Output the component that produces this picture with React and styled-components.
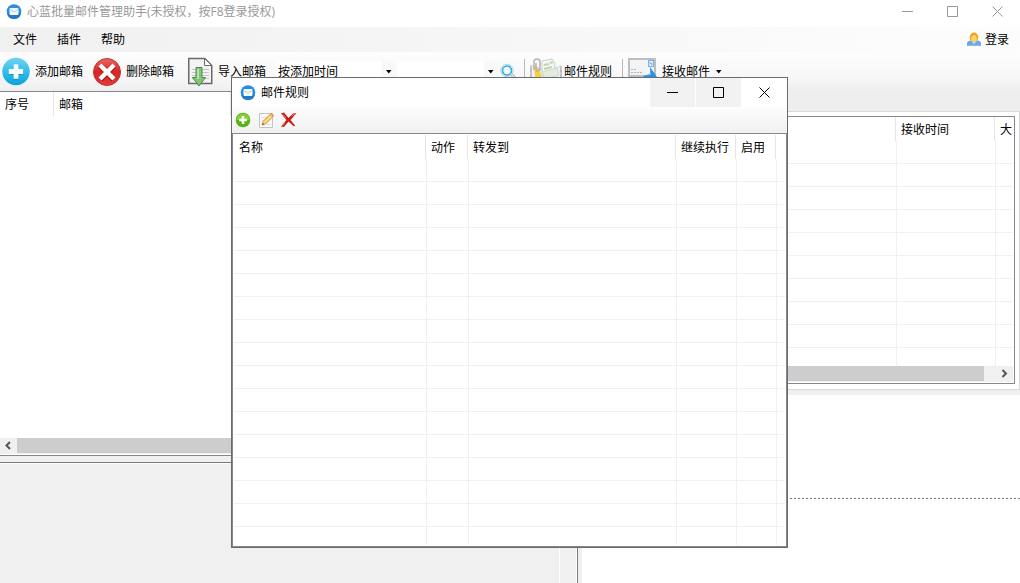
import React, { useState } from 'react'
import styled, { createGlobalStyle, css } from 'styled-components'

const RULE_COLUMNS = [
  { label: '名称', width: 192 },
  { label: '动作', width: 42 },
  { label: '转发到', width: 208 },
  { label: '继续执行', width: 60 },
  { label: '启用', width: 40 },
  { label: '' },
]
const MAIL_COLUMNS = [
  { label: '', width: 308 },
  { label: '接收时间', width: 99 },
  { label: '大' },
]
const ACCOUNT_COLUMNS = [
  { label: '序号', width: 54 },
  { label: '邮箱', width: 177 },
  { label: '' },
]
const MENUS = ['文件', '插件', '帮助']

export default function App() {
  const [order, setOrder] = useState('按添加时间')
  const [query, setQuery] = useState('')
  return (
    <Window>
      <GlobalStyle />
      <TitleBar>
        <AppIcon />
        <Title>心蓝批量邮件管理助手(未授权，按F8登录授权)</Title>
        <WindowControls />
      </TitleBar>
      <MenuBar>
        {MENUS.map(label => (
          <MenuButton key={label}>{label}</MenuButton>
        ))}
        <LoginButton>
          <UserIcon />
          登录
        </LoginButton>
      </MenuBar>
      <Toolbar>
        <ToolGroup>
          <ToolButton>
            <AddIcon />
            添加邮箱
          </ToolButton>
          <ToolButton>
            <DeleteIcon />
            删除邮箱
          </ToolButton>
        </ToolGroup>
        <ToolButton>
          <ImportIcon />
          导入邮箱
        </ToolButton>
        <Combo $width={118}>
          <select
            aria-label="排序"
            value={order}
            onChange={e => setOrder(e.target.value)}
          >
            <option>按添加时间</option>
          </select>
          <Caret />
        </Combo>
        <Combo $width={99}>
          <select
            aria-label="搜索"
            value={query}
            onChange={e => setQuery(e.target.value)}
          >
            <option value="" />
          </select>
          <Caret />
        </Combo>
        <SearchButton aria-label="查找">
          <SearchIcon />
        </SearchButton>
        <Divider />
        <ToolButton $tight>
          <RulesIcon />
          邮件规则
        </ToolButton>
        <Divider />
        <ToolButton>
          <ReceiveIcon />
          接收邮件
          <Caret />
        </ToolButton>
      </Toolbar>
      <Main>
        <LeftPane>
          <AccountList>
            <TableClip>
              <ListTable columns={ACCOUNT_COLUMNS} rows={0} />
            </TableClip>
            <ScrollBar>
              <ScrollButton aria-label="向左">
                <ArrowIcon d="M6 1 2.5 4.5 6 8" />
              </ScrollButton>
              <ScrollThumb />
            </ScrollBar>
          </AccountList>
          <LogPane>
            <LogText />
            <LogGutter />
          </LogPane>
        </LeftPane>
        <RightPane>
          <TabStrip />
          <TabPage>
            <MailList>
              <TableClip>
                <ListTable columns={MAIL_COLUMNS} rows={10} />
              </TableClip>
              <ScrollBar>
                <ScrollThumb />
                <ScrollTrack />
                <ScrollButton aria-label="向右">
                  <ArrowIcon d="M2.5 1 6 4.5 2.5 8" />
                </ScrollButton>
              </ScrollBar>
            </MailList>
          </TabPage>
          <Preview>
            <PreviewHead />
          </Preview>
        </RightPane>
      </Main>
      <RulesDialog />
    </Window>
  )
}

const RulesDialog = () => (
  <Dialog role="dialog" aria-label="邮件规则">
    <DialogTitle>
      <AppIcon />
      <Title $active>邮件规则</Title>
      <WindowControls active />
    </DialogTitle>
    <DialogTools>
      <IconButton aria-label="添加">
        <SmallAddIcon />
      </IconButton>
      <IconButton aria-label="编辑">
        <EditIcon />
      </IconButton>
      <IconButton aria-label="删除">
        <CrossIcon />
      </IconButton>
    </DialogTools>
    <RuleList>
      <TableClip>
        <ListTable columns={RULE_COLUMNS} rows={17} />
      </TableClip>
    </RuleList>
  </Dialog>
)

const ListTable = ({ columns, rows }) => (
  <Table>
    <thead>
      <tr>
        {columns.map((c, i) => (
          <HeadCell key={i} $width={c.width}>
            {c.label}
          </HeadCell>
        ))}
      </tr>
    </thead>
    <tbody>
      {Array.from({ length: rows }, (_, r) => (
        <tr key={r}>
          {columns.map((c, i) => (
            <Cell key={i} />
          ))}
        </tr>
      ))}
    </tbody>
  </Table>
)

const WindowControls = ({ active }) => (
  <Controls $active={active}>
    <ControlButton $active={active} aria-label="最小化">
      <ControlIcon d="M0 5.5h11" />
    </ControlButton>
    <ControlButton $active={active} aria-label="最大化">
      <ControlIcon d="M.5.5h10v10H.5z" />
    </ControlButton>
    <ControlButton aria-label="关闭">
      <ControlIcon d="M.5.5l10 10M10.5.5l-10 10" />
    </ControlButton>
  </Controls>
)

const ControlIcon = ({ d }) => (
  <svg width="11" height="11" fill="none" stroke="currentColor">
    <path d={d} />
  </svg>
)

const ArrowIcon = ({ d }) => (
  <svg width="9" height="9" fill="none" stroke="#555" strokeWidth="2">
    <path d={d} />
  </svg>
)

const Caret = () => (
  <svg width="7" height="4" aria-hidden="true">
    <path d="M1 0h5.500L3.750 3.500z" fill="#000" />
  </svg>
)

const AppIcon = () => (
  <svg width="16" height="16">
    <circle cx="8" cy="7.500" r="7.300" fill="#2b8de0" />
    <path d="M1 9.500a7.200 7.200 0 0 0 14 0z" fill="#1f78cc" />
    <rect x="3.500" y="4" width="9" height="7" rx="1" fill="#f4f9fe" />
    <path d="M4 5.500 8 8l4-2.500" fill="none" stroke="#a9d0f2" />
  </svg>
)

const UserIcon = () => (
  <svg width="14" height="15">
    <path d="M0 13.500v-2C0 9.500 2 8.500 4 8.500h6c2 0 4 1 4 3v2z" fill="#5ba8f5" />
    <path d="M0 12.500h14V14H0z" fill="#8fb4d8" />
    <path d="M3.500 8.500 7 12l3.500-3.500z" fill="#dceeff" />
    <ellipse cx="7" cy="5.500" rx="4.200" ry="5" fill="#f0a020" />
    <ellipse cx="7" cy="6.500" rx="2.800" ry="3.500" fill="#ffd36a" />
  </svg>
)

const AddIcon = () => (
  <svg width="28" height="29" viewBox="0 0 29 30">
    <defs>
      <linearGradient id="add" x2="0" y2="1">
        <stop offset="0" stopColor="#6fd3f2" />
        <stop offset=".5" stopColor="#35bdea" />
        <stop offset="1" stopColor="#08a4dc" />
      </linearGradient>
    </defs>
    <circle cx="14.500" cy="15" r="14.200" fill="url(#add)" />
    <path d="M14.500 8v15.500M7 15.800h15.500" stroke="#1795c4" strokeWidth="5" />
    <path d="M14.500 7.500v15M7 15h15" stroke="#f4fcff" strokeWidth="5" />
  </svg>
)

const DeleteIcon = () => (
  <svg width="28" height="28">
    <defs>
      <linearGradient id="del" x2="0" y2="1">
        <stop offset="0" stopColor="#e66a68" />
        <stop offset=".5" stopColor="#d92324" />
        <stop offset="1" stopColor="#e63a35" />
      </linearGradient>
    </defs>
    <circle cx="14" cy="14" r="13.500" fill="url(#del)" stroke="#c03030" />
    <path d="M7 7.500l14 14M21 7.500l-14 14" stroke="#a01414" strokeWidth="6" />
    <path d="M7 7l14 14M21 7l-14 14" stroke="#fff" strokeWidth="4.500" />
  </svg>
)

const ImportIcon = () => (
  <svg width="25" height="30">
    <path d="M.75 1.500h16l7 7v18h-23z" fill="#f3f3f3" stroke="#6a6a6a" strokeWidth="1.500" />
    <path d="M16.500 1.500v7h7z" fill="#fff" stroke="#6a6a6a" />
    <path d="M4 12.500h17M4 15.500h17M4 18.500h17M4 21.500h17" stroke="#c6c6c6" />
    <path d="M8 10.500h6v10h3.500L11 29l-6.500-8.500H8z" fill="#85c27a" stroke="#4b8a4a" />
    <path d="M10 12v10" stroke="#b9e0b0" strokeWidth="2" />
  </svg>
)

const SearchIcon = () => (
  <svg width="17" height="17" fill="none">
    <path d="M11 11l4.500 4.500" stroke="#b5bcc4" strokeWidth="3" />
    <path d="M11 11l4 4" stroke="#eef1f4" />
    <circle cx="7" cy="7.500" r="6.300" fill="#eefaff" stroke="#bcd3df" />
    <circle cx="7" cy="7.500" r="4.500" stroke="#30a9e4" strokeWidth="1.600" />
  </svg>
)

const RulesIcon = () => (
  <svg width="32" height="30">
    <path d="M1 8l14 6 16-5v20H1z" fill="#edf0f4" stroke="#d5d9dd" />
    <path d="M1 9v18M31 9v18" stroke="#e89090" strokeDasharray="3 3" />
    <path d="M1 12v18M31 12v18" stroke="#6d9fd0" strokeDasharray="3 3" />
    <path d="M12 4l10-2 3 4-1 10-12 3z" fill="#f5f7f1" stroke="#ccd2c8" />
    <path d="M14 8l5-1M20 6l3-1M14 12l8-2" stroke="#bdd3ac" strokeWidth="2" />
    <path d="M4 9l4 1 5 13 15-3-3 9H6z" fill="#f3d437" />
    <path d="M12 15l15-4 2 7-14 4z" fill="#e5ecdf" stroke="#cfd8cc" />
    <path d="M4 13V5a3 3 0 0 1 6 0v7a2 2 0 0 1-4 0V6" fill="none" stroke="#b2b2b2" strokeWidth="1.500" />
  </svg>
)

const ReceiveIcon = () => (
  <svg width="29" height="28">
    <rect x="1" y="1" width="26" height="17" fill="#f3f4f6" stroke="#bcbec2" strokeWidth="2" />
    <rect x="20.500" y="2.500" width="5" height="6" fill="#d9e9fa" stroke="#7db2e6" />
    <path d="M22 4.500l2 2" stroke="#2c6fb5" />
    <path d="M3 11.500h5M3 14.500h11" stroke="#b4b4b4" strokeDasharray="2 1" />
    <path d="M22 9l7 10v2H18l-3-3 7-2z" fill="#2790ec" />
    <path d="M22 10l1 7-6 1 5-2z" fill="#6bbaf6" />
  </svg>
)

const SmallAddIcon = () => (
  <svg width="16" height="16">
    <circle cx="8" cy="8" r="7.300" fill="#55b515" />
    <path d="M1.500 8a6.500 6.500 0 0 1 13 0z" fill="#83cf35" />
    <path d="M8 4v8M4 8h8" stroke="#fff" strokeWidth="2.500" />
  </svg>
)

const EditIcon = () => (
  <svg width="16" height="16">
    <path d="M1.500 1.500h13v14h-13z" fill="#fafafa" stroke="#c4c4c4" />
    <path d="M4 5.500h6M4 8.500h4M9 12.500h4" stroke="#ddd" />
    <path d="M4 13l1-3.500L12.500 2l2.500 2.500L7.500 12z" fill="#f9cd6c" stroke="#d19a3c" />
    <path d="M6.500 10.500l7-7" stroke="#ffe9a8" />
    <path d="M12 2l1.500-1L16 3.500 15 5z" fill="#e89a50" />
    <path d="M4 13l.7-2 1.500 1.300z" fill="#555" />
  </svg>
)

const CrossIcon = () => (
  <svg width="16" height="16">
    <path d="M0 1.500l3-1L7.500 6 12 1.500l3.500-.5L9.500 8l4.500 5.500-1 1L7.500 9.500 3 15l-3-.5L5.500 8z" fill="#cc1813" />
    <path d="M1.500 2L5 6M1.500 14L4 11M11 4l3-2.500" stroke="#e8746c" />
  </svg>
)

const GlobalStyle = createGlobalStyle`
  * {
    box-sizing: border-box;
  }
  body {
    margin: 0;
    overflow: hidden;
    background: #fff;
  }
  body, button, select {
    color: #000;
    font: 12px/16px "Open Sans", "Noto Sans CJK SC", sans-serif;
  }
  button {
    padding: 0;
    border: 0;
    background: none;
  }
  svg {
    display: block;
    flex: none;
  }
`
const Window = styled.div`
  position: relative;
  display: flex;
  flex-direction: column;
  height: 100vh;
`
const TitleBar = styled.header`
  display: flex;
  align-items: center;
  height: 27px;
  padding: 0 0 4px 6px;
  gap: 5px;
`
const Title = styled.h1`
  flex: 1;
  margin: 0;
  font-size: 12px;
  font-weight: 400;
  color: ${({ $active }) => ($active ? '#000' : '#999')};
`
const Controls = styled.div`
  display: flex;
  align-self: stretch;
  gap: ${({ $active }) => ($active ? 1 : 0)}px;
  color: ${({ $active }) => ($active ? '#000' : '#999')};
`
const ControlButton = styled.button`
  display: flex;
  align-items: center;
  justify-content: center;
  width: 45px;
  color: inherit;
  background: ${({ $active }) => ($active ? '#f2f2f2' : 'none')};
`
const MenuBar = styled.nav`
  display: flex;
  align-items: center;
  height: 25px;
  padding: 0 11px 0 13px;
  gap: 20px;
  background: linear-gradient(to right, #f0f0f0, #fcfcfc 90%);
`
const MenuButton = styled.button``
const LoginButton = styled.button`
  display: flex;
  align-items: center;
  gap: 4px;
  margin-left: auto;
`
const Toolbar = styled.div`
  display: flex;
  align-items: center;
  height: 39px;
  padding-left: 2px;
  background: linear-gradient(#fdfdfd, #f7f7f7 65%, #eee);
`
const ToolGroup = styled.div`
  display: flex;
  margin-right: 4px;
`
const ToolButton = styled.button`
  display: flex;
  align-items: center;
  gap: ${({ $tight }) => ($tight ? 2 : 5)}px;
  margin-right: 10px;
  white-space: nowrap;
`
const Combo = styled.div`
  display: flex;
  align-items: center;
  width: ${({ $width }) => $width}px;
  height: 22px;
  margin-right: 3px;
  padding-right: 2px;
  background: linear-gradient(to left, #f8f8f8 12px, #fff 12px);
  select {
    flex: 1;
    min-width: 0;
    appearance: none;
    border: 0;
    padding: 0 2px;
    background: none;
  }
`
const SearchButton = styled.button`
  margin: 0 7px 0 1px;
`
const Divider = styled.span`
  width: 1px;
  height: 26px;
  margin-right: 5px;
  background: #b8b8b8;
`
const Main = styled.main`
  display: grid;
  grid-template-columns: 582px 1fr;
  flex: 1;
  min-height: 0;
`
const LeftPane = styled.section`
  display: flex;
  flex-direction: column;
  min-width: 0;
  padding-right: 4px;
  background: #f0f0f0;
`
const AccountList = styled.div`
  display: flex;
  flex-direction: column;
  flex: 1;
  padding-bottom: 1px;
  border: 1px solid #828790;
  border-left: 0;
  background: #fff;
`
const LogPane = styled.div`
  display: flex;
  height: 121px;
  margin-top: 6px;
  border: solid #7a7a7e;
  border-width: 1px 1px 0 0;
  background: #fff;
  padding: 1px 1px 0 0;
  gap: 1px;
`
const LogText = styled.div`
  flex: 1;
  background: #f0f0f0;
`
const LogGutter = styled.div`
  width: 16px;
  background: #f0f0f0;
`
const RightPane = styled.section`
  display: flex;
  flex-direction: column;
  min-width: 0;
`
const TabStrip = styled.div`
  height: 20px;
  background: #eee;
`
const TabPage = styled.div`
  display: flex;
  height: 279px;
  padding: 4px 4px 5px 3px;
  border: 1px solid #d9d9d9;
`
const MailList = styled.div`
  display: flex;
  flex-direction: column;
  flex: 1;
  min-width: 0;
  padding: 0 1px 1px;
  border: 1px solid #828790;
`
const TableClip = styled.div`
  flex: 1;
  min-height: 0;
  overflow: hidden;
`
const Table = styled.table`
  width: 100%;
  table-layout: fixed;
  border-spacing: 0;
`
const HeadCell = styled.th`
  width: ${({ $width }) => ($width ? `${$width}px` : 'auto')};
  height: 24px;
  padding: 2px 0 0 5px;
  overflow: hidden;
  font-weight: 400;
  text-align: left;
  white-space: nowrap;
  &:not(:last-child) {
    border-right: 1px solid #e5e5e5;
  }
`
const Cell = styled.td`
  height: 23px;
  padding: 0;
  border-bottom: 1px solid #f0f0f0;
  & + & {
    border-left: 1px solid #f0f0f0;
  }
`
const ScrollBar = styled.div`
  display: flex;
  height: 16px;
  border-bottom: 1px solid #f0f0f0;
  background: #f0f0f0;
`
const ScrollButton = styled.button`
  display: flex;
  align-items: center;
  justify-content: center;
  width: 17px;
`
const ScrollThumb = styled.div`
  flex: 1;
  background: #cdcdcd;
`
const ScrollTrack = styled.div`
  width: 12px;
`
const Preview = styled.div`
  flex: 1;
  border-top: 5px solid #f0f0f0;
`
const dashes = css`
  repeating-linear-gradient(to right, #7a7a7a 0 2px, #fff 2px 4px)
`
const PreviewHead = styled.div`
  height: 104px;
  background: ${dashes} bottom / 100% 1px no-repeat;
`
const Dialog = styled.section`
  position: absolute;
  inset: 77px 232px 35px 231px;
  display: flex;
  flex-direction: column;
  border: 1px solid #696b6e;
  background: #fff;
`
const DialogTitle = styled.header`
  display: flex;
  align-items: center;
  height: 29px;
  padding-left: 8px;
  gap: 5px;
`
const DialogTools = styled.div`
  display: flex;
  align-items: center;
  height: 26px;
  padding-left: 3px;
  gap: 7px;
  background: linear-gradient(#fdfdfd, #f0f0f0);
`
const IconButton = styled.button``
const RuleList = styled.div`
  display: flex;
  flex: 1;
  min-height: 0;
  padding: 1px;
  border: 1px solid #828790;
`
